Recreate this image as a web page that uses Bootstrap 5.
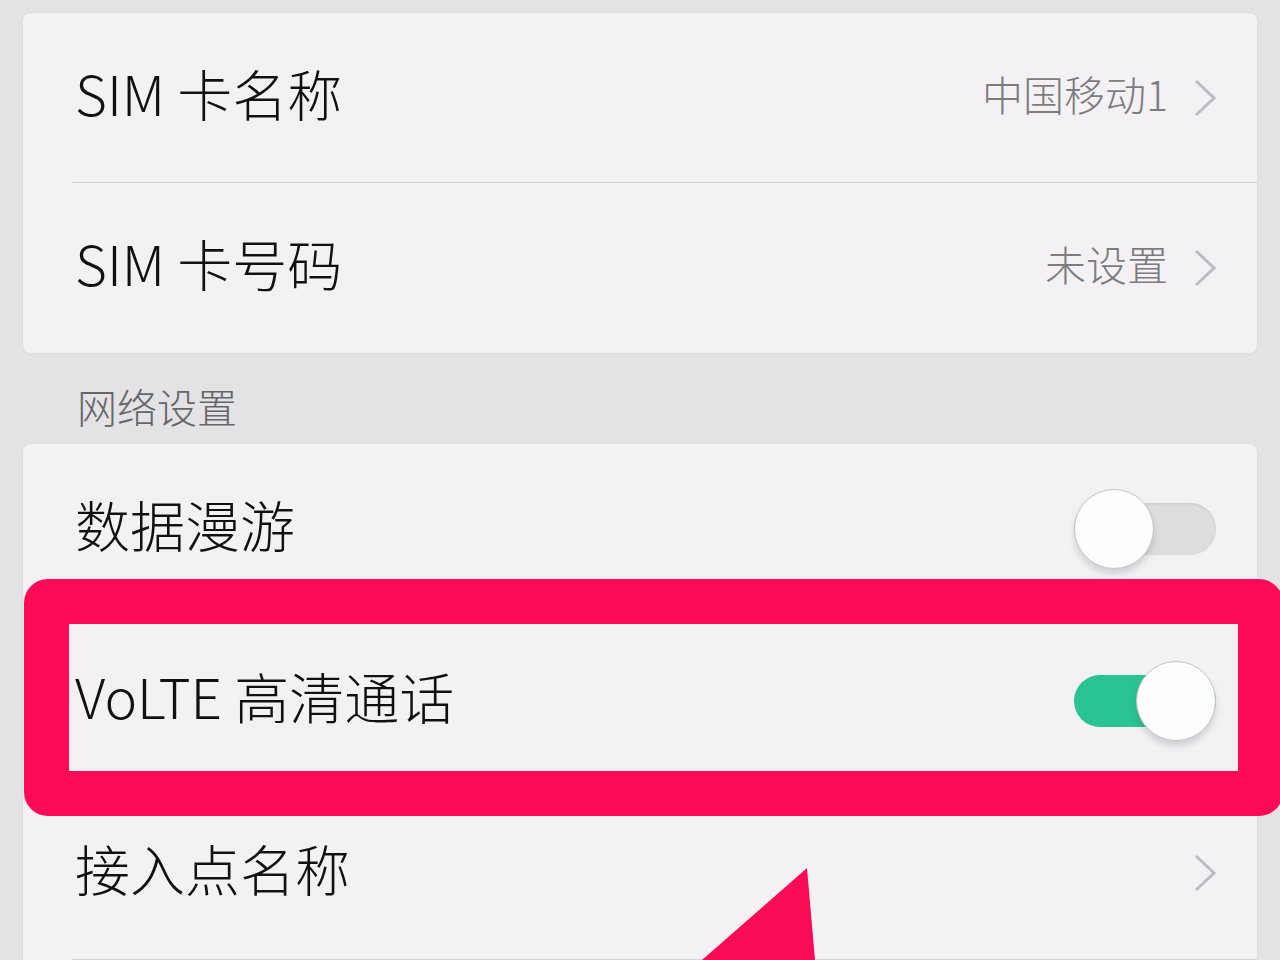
<!DOCTYPE html>
<html lang="zh-CN">
<head>
<meta charset="utf-8">
<meta name="viewport" content="width=device-width, initial-scale=1">
<title>SIM 卡设置</title>
<link rel="stylesheet" href="https://cdn.jsdelivr.net/npm/bootstrap@5.3.0/dist/css/bootstrap.min.css">
<style>
  body { background: #e3e2e4; color: #111113; font-family: "Noto Sans CJK SC", sans-serif; font-weight: 300; }
  .settings { padding: 13px 23px 0; overflow: hidden; }
  .group { background: #f3f1f4; border-radius: 8px; box-shadow: 0 0 2px #d3d2d6; }
  .group-open { border-radius: 8px 8px 0 0; }
  .item { min-height: 170px; padding: 0 41px 0 49px; font-size: 55px; line-height: 64px; color: inherit; text-decoration: none; }
  .group-open .item { min-height: 172px; padding-bottom: 3px; }
  .item::after { content: ""; position: absolute; left: 49px; right: 0; bottom: 0; height: 1px; background: #d3d2d5; }
  .group:not(.group-open) .item:last-child::after { display: none; }
  .item-label { padding: 0 0 12px 3px; }
  .item-value { margin-right: 26px; padding-bottom: 10px; font-size: 41px; color: #7c7c7e; }
  .section-title { margin: 0; height: 91px; padding: 14px 54px 0; font-size: 40px; line-height: 48px; font-weight: 300; color: #666669; }
  .chevron { width: 22px; height: 38px; fill: none; stroke: #bcbcc4; stroke-width: 3; }
  .toggle { appearance: none; position: relative; flex: none; width: 142px; height: 80px; margin: 0; cursor: pointer; }
  .toggle::before { content: ""; position: absolute; inset: 14px 0; border-radius: 26px; background: #dddcde; box-shadow: inset 0 1px 2px #c9c8cb; }
  .toggle::after { content: ""; position: absolute; left: 0; top: 0; width: 80px; height: 80px; border-radius: 50%; background: #fdfdfe; border: 1px solid #c9c5c7; box-shadow: 0 5px 6px rgba(60, 60, 70, .18); }
  .toggle:checked::before { background: #2ac393; box-shadow: none; }
  .toggle:checked::after { left: auto; right: 0; }
  .highlight-frame { position: absolute; z-index: 2; inset: -37px -26px -28px 1px; border: 45px solid #fd0b56; border-radius: 24px; pointer-events: none; }
  .pointer-arrow { position: absolute; z-index: 2; left: 55%; bottom: 0; width: 113px; height: 92px; fill: #fa0b55; }
</style>
</head>
<body>
<main class="settings min-vh-100">
  <section class="group">
    <a href="#name" class="item position-relative d-flex align-items-center">
      <span class="item-label me-auto">SIM 卡名称</span>
      <span class="item-value">中国移动1</span>
      <svg class="chevron" viewBox="0 0 22 38" aria-hidden="true"><path d="M2 2 20 19 2 36"/></svg>
    </a>
    <a href="#number" class="item position-relative d-flex align-items-center">
      <span class="item-label me-auto">SIM 卡号码</span>
      <span class="item-value">未设置</span>
      <svg class="chevron" viewBox="0 0 22 38" aria-hidden="true"><path d="M2 2 20 19 2 36"/></svg>
    </a>
  </section>

  <h2 class="section-title d-flex align-items-center">网络设置</h2>

  <section class="group group-open">
    <div class="item position-relative d-flex align-items-center">
      <label class="item-label me-auto" for="roaming">数据漫游</label>
      <input class="toggle" type="checkbox" role="switch" id="roaming">
    </div>
    <div class="item position-relative d-flex align-items-center">
      <label class="item-label me-auto" for="volte">VoLTE 高清通话</label>
      <input class="toggle" type="checkbox" role="switch" id="volte" checked>
      <div class="highlight-frame"></div>
    </div>
    <a href="#apn" class="item position-relative d-flex align-items-center">
      <span class="item-label me-auto">接入点名称</span>
      <svg class="chevron" viewBox="0 0 22 38" aria-hidden="true"><path d="M2 2 20 19 2 36"/></svg>
      <svg class="pointer-arrow" viewBox="0 0 113 92" aria-hidden="true"><path d="M0 92 105 0 113 92Z"/></svg>
    </a>
  </section>
</main>
<script src="https://cdn.jsdelivr.net/npm/bootstrap@5.3.0/dist/js/bootstrap.bundle.min.js"></script>
</body>
</html>
